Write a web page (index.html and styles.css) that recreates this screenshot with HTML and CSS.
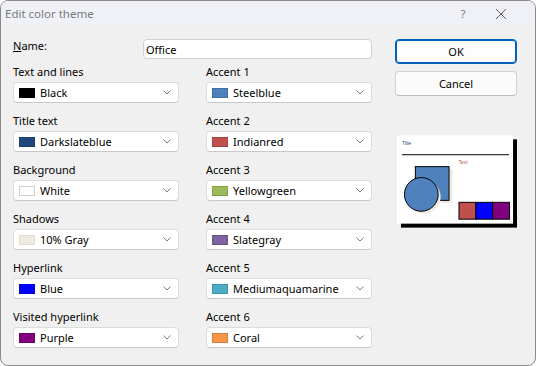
FILE: index.html
```html
<!DOCTYPE html>
<html>
<head>
    <title>Edit color theme</title>
    <meta name="viewport" content="width=device-width, initial-scale=1.0">
    <link rel="stylesheet" href="styles.css">
</head>
<body>
    <div class="dialog">
        <div class="titlebar">
            <span class="title">Edit color theme</span>
            <span class="help">?</span>
            <span class="close">
                <svg width="12" height="12" viewBox="0 0 12 12"><path d="M1 1 L11 11 M11 1 L1 11" stroke="#5f5f5f" stroke-width="1" fill="none"/></svg>
            </span>
        </div>
        <div class="content">
            <div class="form">
                <div class="name-row">
                    <label for="name"><u>N</u>ame:</label>
                    <input type="text" id="name" value="Office">
                </div>
                <div class="fields">
                    <div class="field">
                        <div class="label">Text and lines</div>
                        <div class="combo"><span class="swatch sw-black"></span><span class="value">Black</span><svg class="chev" width="8" height="5" viewBox="0 0 8 5"><path d="M0.5 0.5 L4 4 L7.5 0.5" stroke="#7a7a7a" fill="none"/></svg></div>
                    </div>
                    <div class="field">
                        <div class="label">Accent 1</div>
                        <div class="combo"><span class="swatch sw-steel"></span><span class="value">Steelblue</span><svg class="chev" width="8" height="5" viewBox="0 0 8 5"><path d="M0.5 0.5 L4 4 L7.5 0.5" stroke="#7a7a7a" fill="none"/></svg></div>
                    </div>
                    <div class="field">
                        <div class="label">Title text</div>
                        <div class="combo"><span class="swatch sw-dsb"></span><span class="value">Darkslateblue</span><svg class="chev" width="8" height="5" viewBox="0 0 8 5"><path d="M0.5 0.5 L4 4 L7.5 0.5" stroke="#7a7a7a" fill="none"/></svg></div>
                    </div>
                    <div class="field">
                        <div class="label">Accent 2</div>
                        <div class="combo"><span class="swatch sw-indian"></span><span class="value">Indianred</span><svg class="chev" width="8" height="5" viewBox="0 0 8 5"><path d="M0.5 0.5 L4 4 L7.5 0.5" stroke="#7a7a7a" fill="none"/></svg></div>
                    </div>
                    <div class="field">
                        <div class="label">Background</div>
                        <div class="combo"><span class="swatch sw-white"></span><span class="value">White</span><svg class="chev" width="8" height="5" viewBox="0 0 8 5"><path d="M0.5 0.5 L4 4 L7.5 0.5" stroke="#7a7a7a" fill="none"/></svg></div>
                    </div>
                    <div class="field">
                        <div class="label">Accent 3</div>
                        <div class="combo"><span class="swatch sw-yg"></span><span class="value">Yellowgreen</span><svg class="chev" width="8" height="5" viewBox="0 0 8 5"><path d="M0.5 0.5 L4 4 L7.5 0.5" stroke="#7a7a7a" fill="none"/></svg></div>
                    </div>
                    <div class="field">
                        <div class="label">Shadows</div>
                        <div class="combo"><span class="swatch sw-gray"></span><span class="value">10% Gray</span><svg class="chev" width="8" height="5" viewBox="0 0 8 5"><path d="M0.5 0.5 L4 4 L7.5 0.5" stroke="#7a7a7a" fill="none"/></svg></div>
                    </div>
                    <div class="field">
                        <div class="label">Accent 4</div>
                        <div class="combo"><span class="swatch sw-slate"></span><span class="value">Slategray</span><svg class="chev" width="8" height="5" viewBox="0 0 8 5"><path d="M0.5 0.5 L4 4 L7.5 0.5" stroke="#7a7a7a" fill="none"/></svg></div>
                    </div>
                    <div class="field">
                        <div class="label">Hyperlink</div>
                        <div class="combo"><span class="swatch sw-blue"></span><span class="value">Blue</span><svg class="chev" width="8" height="5" viewBox="0 0 8 5"><path d="M0.5 0.5 L4 4 L7.5 0.5" stroke="#7a7a7a" fill="none"/></svg></div>
                    </div>
                    <div class="field">
                        <div class="label">Accent 5</div>
                        <div class="combo"><span class="swatch sw-aqua"></span><span class="value">Mediumaquamarine</span><svg class="chev" width="8" height="5" viewBox="0 0 8 5"><path d="M0.5 0.5 L4 4 L7.5 0.5" stroke="#7a7a7a" fill="none"/></svg></div>
                    </div>
                    <div class="field">
                        <div class="label">Visited hyperlink</div>
                        <div class="combo"><span class="swatch sw-purple"></span><span class="value">Purple</span><svg class="chev" width="8" height="5" viewBox="0 0 8 5"><path d="M0.5 0.5 L4 4 L7.5 0.5" stroke="#7a7a7a" fill="none"/></svg></div>
                    </div>
                    <div class="field">
                        <div class="label">Accent 6</div>
                        <div class="combo"><span class="swatch sw-coral"></span><span class="value">Coral</span><svg class="chev" width="8" height="5" viewBox="0 0 8 5"><path d="M0.5 0.5 L4 4 L7.5 0.5" stroke="#7a7a7a" fill="none"/></svg></div>
                    </div>
                </div>
            </div>
            <div class="side">
                <button class="btn btn-ok">OK</button>
                <button class="btn">Cancel</button>
                <div class="preview">
                    <svg width="121" height="93" viewBox="0 0 121 93">
                        <rect x="4" y="4" width="117" height="89" fill="#000"/>
                        <rect x="0" y="0" width="117" height="89" fill="#fff"/>
                        <text x="5" y="10" font-size="5" font-family="Liberation Sans, sans-serif" fill="#1f497d">Title</text>
                        <line x1="5" y1="19.5" x2="113" y2="19.5" stroke="#000" stroke-width="1"/>
                        <text x="62" y="29" font-size="5" font-family="Liberation Sans, sans-serif" fill="#c0504d">Text</text>
                        <rect x="21" y="34" width="35" height="34" fill="#eeece1"/>
                        <rect x="18.5" y="31.5" width="34" height="34" fill="#4f81bd" stroke="#000"/>
                        <circle cx="27" cy="62" r="17" fill="#eeece1"/>
                        <circle cx="24.5" cy="59.5" r="17" fill="#4f81bd" stroke="#000"/>
                        <rect x="62.5" y="67.5" width="17" height="17" fill="#c0504d" stroke="#000"/>
                        <rect x="79.5" y="67.5" width="17" height="17" fill="#0000ff" stroke="#000"/>
                        <rect x="96.5" y="67.5" width="17" height="17" fill="#800080" stroke="#000"/>
                    </svg>
                </div>
            </div>
        </div>
    </div>
</body>
</html>
```

FILE: styles.css
```css
:root {
    --bg-color: #f0f0f0;
    --title-bg: #eff1f7;
    --border-color: #d1d1d1;
    --accent: #005fb8;
}

* {
    box-sizing: border-box;
}

body {
    margin: 0;
    background: #fff;
    font-family: "Noto Sans", "Open Sans", sans-serif;
    font-size: 11px;
    color: #000;
}

.dialog {
    width: 536px;
    height: 366px;
    border: 1px solid #8a8a8a;
    border-radius: 8px;
    background: var(--bg-color);
    overflow: hidden;
}

.titlebar {
    height: 25px;
    background: var(--title-bg);
    display: flex;
    align-items: center;
    padding-left: 4px;
    font-size: 11.5px;
}

.title {
    color: #7a7a7a;
    flex: 1;
}

.help {
    color: #7a7a7a;
    width: 14px;
    margin-right: 25px;
    text-align: center;
}

.close {
    display: flex;
    margin-right: 28px;
}

.content {
    display: flex;
    padding: 13px 0 0 12px;
}

.form {
    width: 359px;
}

.name-row {
    display: flex;
    align-items: flex-start;
}

.name-row label {
    line-height: 14px;
}

.name-row input {
    margin-left: auto;
    width: 229px;
    height: 20px;
    border: 1px solid var(--border-color);
    border-radius: 4px;
    background: #fff;
    font: inherit;
    padding: 0 2px;
    color: #000;
}

.fields {
    display: grid;
    grid-template-columns: 166px 166px;
    column-gap: 27px;
    row-gap: 10px;
    margin-top: 5px;
}

.label {
    line-height: 16px;
    margin-bottom: 2px;
}

.combo {
    height: 21px;
    background: #fff;
    border: 1px solid #dcdcdc;
    border-bottom-color: #c8c8c8;
    border-radius: 4px;
    display: flex;
    align-items: center;
    padding-left: 5px;
}

.swatch {
    width: 16px;
    height: 10px;
    margin-right: 5px;
    border: 1px solid rgba(0,0,0,0.15);
}

.value {
    flex: 1;
}

.chev {
    margin-right: 7px;
}

.sw-black { background: #000; }
.sw-dsb { background: #1f497d; }
.sw-white { background: #fff; border-color: #cfcfcf; }
.sw-gray { background: #eeece1; border-color: #dedbd0; }
.sw-blue { background: #0000ff; }
.sw-purple { background: #800080; }
.sw-steel { background: #4f81bd; }
.sw-indian { background: #c0504d; }
.sw-yg { background: #9bbb59; }
.sw-slate { background: #8064a2; }
.sw-aqua { background: #4bacc6; }
.sw-coral { background: #f79646; }

.side {
    margin-left: 23px;
    width: 122px;
    display: flex;
    flex-direction: column;
}

.btn {
    height: 25px;
    background: #fbfbfb;
    border: 1px solid #d0d0d0;
    border-bottom-color: #bcbcbc;
    border-radius: 4px;
    font: inherit;
    color: #000;
    padding: 0;
}

.btn + .btn {
    margin-top: 7px;
}

.btn-ok {
    border: 1px solid var(--accent);
    box-shadow: inset 0 0 0 1px var(--accent);
    background: #fdfdfd;
}

.preview {
    margin-top: 39px;
    margin-left: 2px;
    display: flex;
}
```
